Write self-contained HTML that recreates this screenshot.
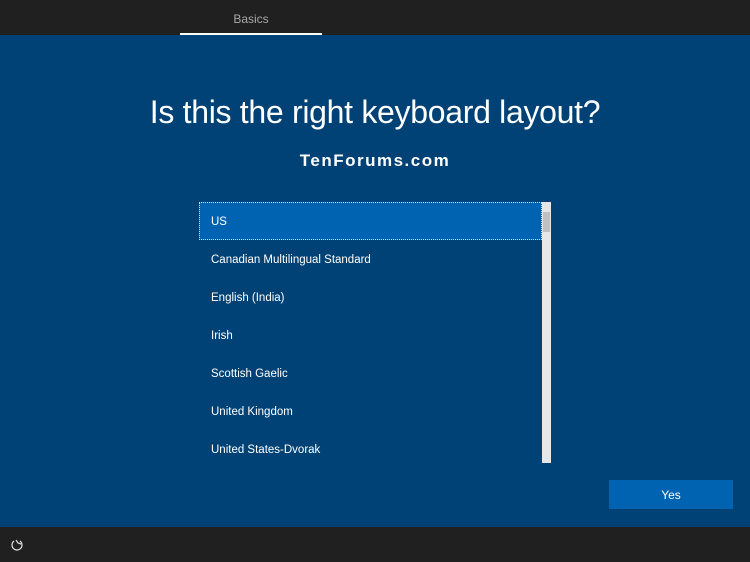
<!DOCTYPE html>
<html><head><style>
body{margin:0;width:750px;height:562px;overflow:hidden;background:#004275;font-family:"Segoe UI","Liberation Sans",sans-serif;position:relative}
.top{position:absolute;left:0;top:0;width:750px;height:35px;background:#202020}
.tab{position:absolute;left:180px;top:0;width:142px;height:33px;color:#a8a8a8;font-size:12px;text-align:center;line-height:38px;border-bottom:2px solid #fff}
.bot{position:absolute;left:0;top:527px;width:750px;height:35px;background:#202020}
h1{position:absolute;top:89px;left:0;width:750px;margin:0;text-align:center;color:#fff;font-weight:300;font-size:32px;line-height:46px;letter-spacing:-0.3px}
.tf{position:absolute;top:150px;left:0;width:750px;text-align:center;color:#fff;font-weight:bold;font-size:17px;line-height:22px;letter-spacing:1.5px}
.list{position:absolute;left:199px;top:202px;width:343px;height:261px}
.it{height:38px;line-height:40px;padding-left:12px;color:#fff;font-size:11.5px}
.sel{background:#0063b1;outline:1px dotted #ddd;outline-offset:-1px}
.sb{position:absolute;left:542px;top:202px;width:9px;height:261px;background:#e6e6e6}
.th{position:absolute;left:1px;top:10px;width:7px;height:20px;background:#c0c0c0}
.yes{position:absolute;left:609px;top:480px;width:124px;height:29px;background:#0063b1;color:#fff;font-size:12px;text-align:center;line-height:31px}
</style></head><body>
<div class="top"><div class="tab">Basics</div></div>
<h1>Is this the right keyboard layout?</h1>
<div class="tf">TenForums.com</div>
<div class="list">
<div class="it sel">US</div>
<div class="it">Canadian Multilingual Standard</div>
<div class="it">English (India)</div>
<div class="it">Irish</div>
<div class="it">Scottish Gaelic</div>
<div class="it">United Kingdom</div>
<div class="it">United States-Dvorak</div>
</div>
<div class="sb"><div class="th"></div></div>
<div class="yes">Yes</div>
<div class="bot"><svg style="position:absolute;left:10px;top:11px" width="16" height="14" viewBox="0 0 16 14"><path d="M4 3 A5 5 0 1 0 10 3" fill="none" stroke="#ddd" stroke-width="1.2"/><path d="M6 2 L8 5 L11 6" fill="none" stroke="#ddd" stroke-width="1.2"/></svg></div>
</body></html>
